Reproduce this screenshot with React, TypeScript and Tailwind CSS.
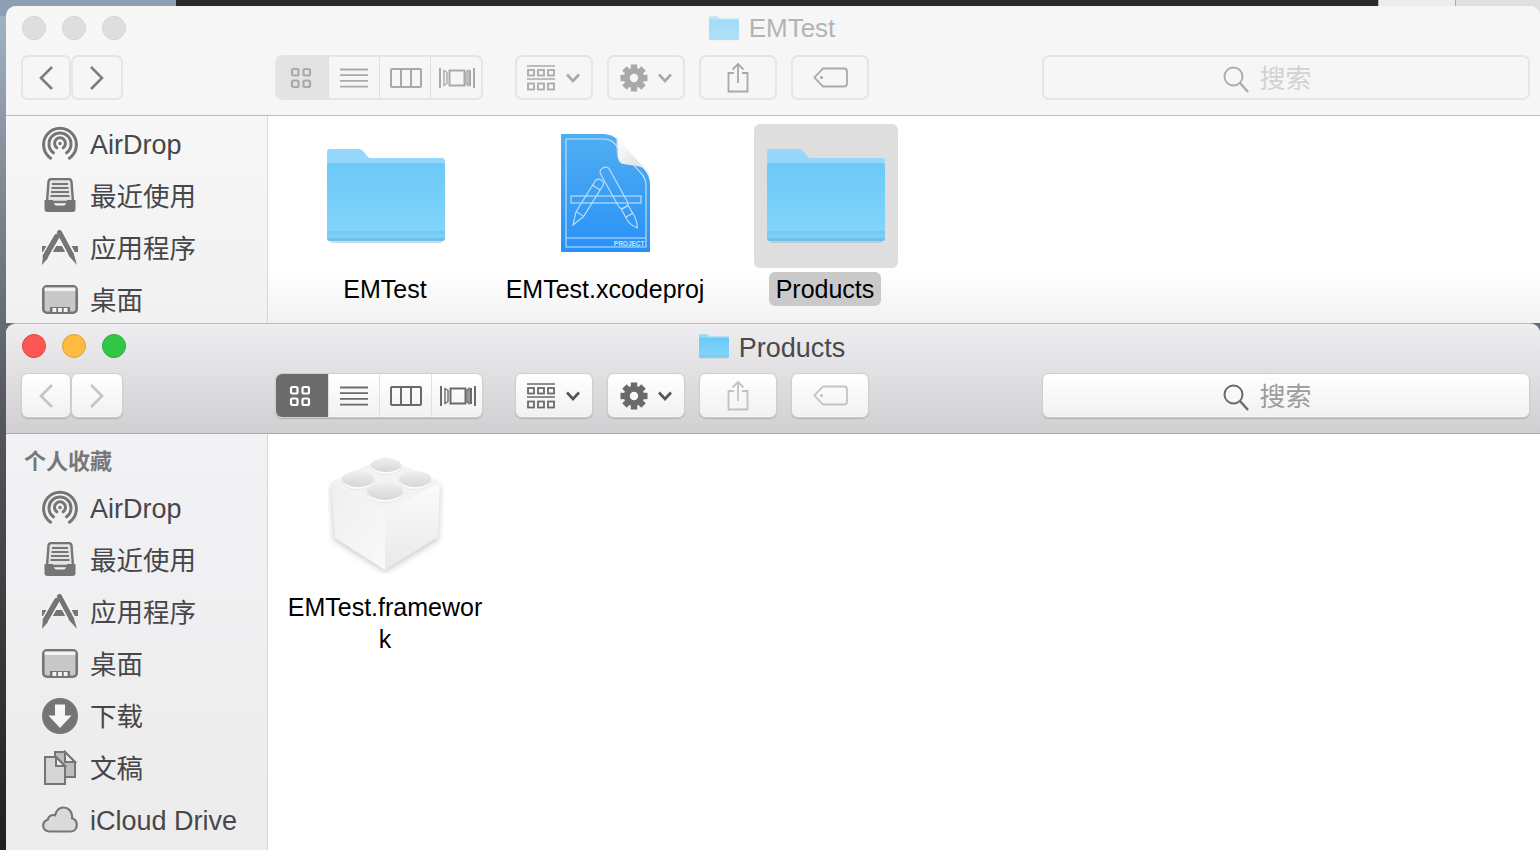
import React from 'react';

const font = "font-['Liberation_Sans','Noto_Sans_CJK_SC',sans-serif]";

const Chevron = ({ dir, className }: { dir: 'left' | 'right' | 'down'; className?: string }) => {
  if (dir === 'down')
    return (
      <svg width="16" height="10" viewBox="0 0 16 10" className={className}>
        <path d="M2 1.5 8 8l6-6.5" fill="none" stroke="currentColor" strokeWidth="2.6" />
      </svg>
    );
  return (
    <svg width="16" height="26" viewBox="0 0 16 26" className={className}>
      <path d={dir === 'left' ? 'M14 2 3 13l11 11' : 'M2 2l11 11L2 24'} fill="none" stroke="currentColor" strokeWidth="2.6" />
    </svg>
  );
};

const IconGrid = () => (
  <svg width="22" height="22" viewBox="0 0 22 22" fill="none" stroke="currentColor" strokeWidth="2.2">
    <rect x="2" y="2" width="6.5" height="6.5" rx="1.5" />
    <rect x="13.5" y="2" width="6.5" height="6.5" rx="1.5" />
    <rect x="2" y="13.5" width="6.5" height="6.5" rx="1.5" />
    <rect x="13.5" y="13.5" width="6.5" height="6.5" rx="1.5" />
  </svg>
);

const IconList = () => (
  <svg width="28" height="20" viewBox="0 0 28 20" fill="none" stroke="currentColor" strokeWidth="1.8">
    <path d="M0 1.5h28M0 7.2h28M0 12.9h28M0 18.6h28" />
  </svg>
);

const IconColumns = () => (
  <svg width="32" height="20" viewBox="0 0 32 20" fill="none" stroke="currentColor" strokeWidth="2">
    <rect x="1" y="1" width="30" height="18" rx="1" />
    <path d="M11 1v18M21 1v18" />
  </svg>
);

const IconCover = () => (
  <svg width="36" height="20" viewBox="0 0 36 20" fill="none" stroke="currentColor" strokeWidth="2">
    <rect x="10.5" y="2.5" width="15" height="15" />
    <path d="M1 0v20M31 2v16M35 0v20" />
    <path d="M5 2.5v15l3-2v-11zM29 2.5v15l-2-2v-11z" strokeWidth="1.4" />
  </svg>
);

const IconGroup = () => (
  <svg width="28" height="26" viewBox="0 0 28 26" fill="none" stroke="currentColor">
    <path d="M0 1h28M0 14h28" strokeWidth="1.6" />
    <g strokeWidth="1.8">
      <rect x="1" y="5" width="6" height="5.5" />
      <rect x="11" y="5" width="6" height="5.5" />
      <rect x="21" y="5" width="6" height="5.5" />
      <rect x="1" y="18.5" width="6" height="6" />
      <rect x="11" y="18.5" width="6" height="6" />
      <rect x="21" y="18.5" width="6" height="6" />
    </g>
  </svg>
);

const IconGear = () => (
  <svg width="28" height="28" viewBox="0 0 28 28" fill="none">
    <circle cx="14" cy="14" r="7.2" stroke="currentColor" strokeWidth="6" />
    {[0, 45, 90, 135, 180, 225, 270, 315].map((a) => (
      <rect key={a} x="10.8" y="0.5" width="6.4" height="6" fill="currentColor" transform={`rotate(${a} 14 14)`} />
    ))}
  </svg>
);

const IconShare = () => (
  <svg width="22" height="31" viewBox="0 0 22 31" fill="none" stroke="currentColor" strokeWidth="1.8">
    <path d="M7 11H1.5v18.5h19V11H15" />
    <path d="M11 21V2M5.5 7.5 11 2l5.5 5.5" />
  </svg>
);

const IconTag = () => (
  <svg width="35" height="21" viewBox="0 0 35 21" fill="none" stroke="currentColor" strokeWidth="1.8">
    <path d="M10 1.5h21a3 3 0 0 1 3 3v12a3 3 0 0 1-3 3H10L1.5 10.5z" />
    <circle cx="8.5" cy="10.5" r="1.6" fill="currentColor" stroke="none" />
  </svg>
);

const IconSearch = () => (
  <svg width="26" height="27" viewBox="0 0 26 27" fill="none" stroke="currentColor" strokeWidth="2">
    <circle cx="10.5" cy="10.5" r="9" />
    <path d="M17 17l8 9" strokeWidth="2.4" />
  </svg>
);

const AirDropIcon = () => (
  <svg width="36" height="36" viewBox="0 0 36 36" fill="none" stroke="#757575" strokeWidth="3" strokeLinecap="round">
    <path d="M8.6 32.2a16.4 16.4 0 1 1 18.8 0" />
    <path d="M11.4 26.8a11 11 0 1 1 13.2 0" />
    <path d="M14.8 21.8a5.5 5.5 0 1 1 6.4 0" />
    <circle cx="18" cy="17.5" r="1" strokeWidth="1.6" />
  </svg>
);

const RecentsIcon = () => (
  <svg width="36" height="36" viewBox="0 0 36 36">
    <path d="M5 24 6.5 3.5Q6.8 1 9.5 1h17q2.7 0 3 2.5L31 24z" fill="#e4e4e4" stroke="#757575" strokeWidth="2.4" />
    <path d="M10 6h16M9.5 10h17M9 14h18M8.5 18h19" stroke="#757575" strokeWidth="2" />
    <path d="M2.5 22H11q1 5.5 3.5 5.500h7q2.5 0 3.500-5.500h8.500v9q0 3-3 3H5.500q-3 0-3-3z" fill="#757575" />
  </svg>
);

const AppsIcon = () => (
  <svg width="36" height="36" viewBox="0 0 36 36" fill="none">
    <path d="M0 16h36v6H0z" fill="#757575" />
    <path d="M14.7 6.7 3 27M17.5 2 29 24" stroke="#f6f6f6" strokeWidth="8.5" />
    <path d="M14.7 6.7 3.5 26" stroke="#757575" strokeWidth="5.5" strokeLinecap="round" />
    <path d="M17.5 2.5 29 24" stroke="#757575" strokeWidth="5" strokeLinecap="round" />
    <path d="M1 25 6 28 0 35z" fill="#757575" />
    <path d="M26.5 25.5 31.5 23 35 35z" fill="#757575" />
  </svg>
);

const DesktopIcon = () => (
  <svg width="36" height="36" viewBox="0 0 36 36">
    <rect x="1.3" y="4.3" width="33.4" height="26.4" rx="3.5" fill="#c8c8c8" stroke="#757575" strokeWidth="2.6" />
    <rect x="2.6" y="5.6" width="30.8" height="3.4" fill="#f2f2f2" />
    <rect x="8" y="25" width="20" height="5" fill="#757575" />
    <path d="M10.5 26h3.8v4h-3.8zM16.1 26h3.8v4h-3.8zM21.7 26h3.8v4h-3.8z" fill="#f4f4f4" />
  </svg>
);

const DownloadIcon = () => (
  <svg width="36" height="36" viewBox="0 0 36 36">
    <circle cx="18" cy="18" r="18" fill="#757575" />
    <path d="M13 6.5h10v11h6.5L18 30 6.5 17.5H13z" fill="#f6f6f6" />
  </svg>
);

const DocsIcon = () => (
  <svg width="36" height="36" viewBox="0 0 36 36" stroke="#757575" strokeWidth="2">
    <path d="M13 2h10l10 10v15H13z" fill="#bcbcbc" />
    <path d="M23 2v10h10z" fill="#ececec" />
    <path d="M3 7h11l9 9v18H3z" fill="#d6d6d6" />
    <path d="M14 7v9h9z" fill="#ececec" />
  </svg>
);

const CloudIcon = () => (
  <svg width="36" height="36" viewBox="0 0 36 36" fill="#dadada" stroke="#757575" strokeWidth="2.2">
    <path d="M7.5 29.5C3.6 29.5 1.2 26.8 1.2 23.6c0-2.9 2-5.2 4.5-5.9C6.5 14.7 8.9 13 11.5 13c.6 0 1 0 1.5.2C14.2 8.5 17.5 5.500 21.5 5.500c4.800 0 8.500 3.800 8.700 8.800 0 .7 0 1.400-.1 2 3.400 1 4.700 3.800 4.700 6.600 0 3.500-2.400 6.600-6.400 6.600z" />
  </svg>
);

const FolderArt = ({ width, height, dim }: { width: number; height: number; dim?: boolean }) => (
  <svg width={width} height={height} viewBox="0 0 118 96" className={dim ? 'opacity-60' : ''}>
    <defs>
      <linearGradient id="folderFront" x1="0" y1="0" x2="0" y2="1">
        <stop offset="0" stopColor="#6bc9f8" />
        <stop offset="1" stopColor="#84d5fb" />
      </linearGradient>
    </defs>
    <path d="M3 0h29q3 0 5 3l3 4q1 2 4 2h71q3 0 3 3v20H0V3q0-3 3-3z" fill="#95d8fc" />
    <path d="M0 17q0-3 3-3h112q3 0 3 3v70H0z" fill="url(#folderFront)" />
    <path d="M0 82h118v3.5H0z" fill="#74c9f3" />
    <path d="M0 85.5h118V89H0z" fill="#7ccff7" />
    <path d="M0 89h118q0 3-3 3.2H3Q0 92 0 89z" fill="#6cc0ea" />
    <path d="M3 92.5h112l-1 1.5H4z" fill="#9ab8c8" opacity=".5" />
  </svg>
);

const ProjectArt = () => (
  <svg width="92" height="120" viewBox="0 0 92 120" className="mb-[6px]">
    <defs>
      <linearGradient id="proj" x1="0" y1="0" x2="0" y2="1">
        <stop offset="0" stopColor="#50aef2" />
        <stop offset="1" stopColor="#2a90f5" />
      </linearGradient>
      <linearGradient id="curl" x1="0" y1="0" x2="1" y2="1">
        <stop offset="0" stopColor="#ffffff" />
        <stop offset="1" stopColor="#cfd6dc" />
      </linearGradient>
    </defs>
    <path d="M1 1h42q9 0 15 6l26 29q6 7 6 16v67H1z" fill="url(#proj)" />
    <g fill="none" stroke="#c2e3fb" strokeWidth="1.1">
      <path d="M6 114V6h37q7 0 11 4l26 29q6 6 6 13v62z" />
      <path d="M6 105h80" />
      <rect x="11" y="63" width="70" height="7" />
      <g transform="translate(13 92) rotate(32)">
        <path d="M0 0-4.5-13V-49q0-4 4.5-4t4.5 4V-13z" />
        <path d="M-4.5-13h9M-4.5-44h9" />
      </g>
      <g transform="translate(43 35) rotate(-29)">
        <rect x="-5" y="0" width="10" height="45" rx="4" />
        <rect x="-4" y="45" width="8" height="9" />
        <path d="M-4 54q-1 8 5 15 4-8 3-15" />
      </g>
    </g>
    <text x="84.5" y="112.5" textAnchor="end" fontSize="6.5" fontWeight="700" fill="#c2e3fb" fontFamily="Liberation Sans">PROJECT</text>
    <path d="M57 4q1 1 2 3l27 30q3 3 4 8-4-11-13-12l-14-2q-4-1-5-6z" fill="url(#curl)" />
    <path d="M57 3q-1 20 2 24 1 3 5 3l21 3" fill="none" stroke="#dfe7ed" strokeWidth="0.6" />
  </svg>
);

const FrameworkArt = () => (
  <svg width="116" height="120" viewBox="0 0 116 120">
    <defs>
      <linearGradient id="left" x1="0" y1="0" x2="1" y2="1">
        <stop offset="0" stopColor="#efefef" />
        <stop offset="1" stopColor="#f9f9f9" />
      </linearGradient>
      <linearGradient id="right" x1="0" y1="0" x2="0" y2="1">
        <stop offset="0" stopColor="#fbfbfb" />
        <stop offset="1" stopColor="#e9e9e9" />
      </linearGradient>
      <linearGradient id="stud" x1="0" y1="0" x2="0" y2="1">
        <stop offset="0" stopColor="#f0f0f0" />
        <stop offset="1" stopColor="#d6d6d6" />
      </linearGradient>
      <filter id="soft" x="-20%" y="-20%" width="140%" height="140%">
        <feGaussianBlur stdDeviation="3" />
      </filter>
    </defs>
    <path d="M3 30 56 62 112 30 110 86 57 118 6 86z" fill="#b8b8b8" opacity=".75" filter="url(#soft)" />
    <path d="M3 28 57 58v58L7 84z" fill="url(#left)" />
    <path d="M112 28 57 58v58l53-33z" fill="url(#right)" />
    <path d="M57 3 112 28 57 58 3 28z" fill="#f3f3f3" />
    {[
      [58, 11, 15, 7],
      [30, 25, 16, 8],
      [87, 25, 16, 8],
      [57, 37, 18, 9],
    ].map(([cx, cy, rx, ry]) => (
      <g key={`${cx}-${cy}`}>
        <ellipse cx={cx} cy={cy + 2.5} rx={rx} ry={ry} fill="#fbfbfb" stroke="#dedede" strokeWidth="0.7" />
        <ellipse cx={cx} cy={cy} rx={rx} ry={ry} fill="url(#stud)" />
      </g>
    ))}
  </svg>
);

const Button = ({ active, width, children }: { active: boolean; width: string; children: React.ReactNode }) => (
  <div
    className={`${width} flex h-[45px] items-center justify-center rounded-[7px] ${
      active
        ? 'border border-[#cfcfcf] bg-linear-to-b from-white to-[#f1f1f1] shadow-[0_1px_1px_rgba(0,0,0,0.18)]'
        : 'border-2 border-[#e5e5e5]'
    }`}
  >
    {children}
  </div>
);

const rows = [
  { label: 'AirDrop', icon: <AirDropIcon />, size: 'pt-[2px] text-[27px]' },
  { label: '最近使用', icon: <RecentsIcon />, size: 'pt-1 text-[26.5px]' },
  { label: '应用程序', icon: <AppsIcon />, size: 'pt-1 text-[26.5px]' },
  { label: '桌面', icon: <DesktopIcon />, size: 'pt-1 text-[26.5px]' },
  { label: '下载', icon: <DownloadIcon />, size: 'pt-1 text-[26.5px]' },
  { label: '文稿', icon: <DocsIcon />, size: 'pt-1 text-[26.5px]' },
  { label: 'iCloud Drive', icon: <CloudIcon />, size: 'pt-[2px] text-[27px]' },
];

const Sidebar = ({ active, count }: { active: boolean; count: number }) => (
  <div
    className={`flex w-[262px] shrink-0 flex-col border-r border-[#d8d8d8] pl-9 ${
      active ? 'bg-linear-to-b from-[#f2f1f4] to-[#ececec] pt-3' : 'bg-linear-to-b from-[#f7f7f7] to-[#f1f1f1] pt-[2px]'
    }`}
  >
    {active && <div className="-ml-[18px] mb-1 h-8 text-[22px] leading-8 font-bold text-[#77777a]">个人收藏</div>}
    {rows.slice(0, count).map((r) => (
      <div key={r.label} className="flex h-[52px] shrink-0 items-center gap-3">
        {r.icon}
        <span className={`${r.size} text-[#47474a]`}>{r.label}</span>
      </div>
    ))}
  </div>
);

const FileItem = ({ label, selected, children }: { label: string; selected?: boolean; children: React.ReactNode }) => (
  <div className="relative flex w-[220px] flex-col items-center">
    <div className={`flex h-36 w-36 shrink-0 items-center justify-center rounded-[6px] ${selected ? 'bg-[#dedede]' : ''}`}>{children}</div>
    <div className={`mt-1 mr-[2px] max-w-[218px] rounded-[6px] px-[7px] py-px text-center text-[25px] leading-8 break-all text-black ${selected ? 'bg-[#cacaca]' : ''}`}>
      {label}
    </div>
  </div>
);

const Window = ({
  active,
  title,
  className,
  children,
}: {
  active: boolean;
  title: string;
  className: string;
  children: React.ReactNode;
}) => {
  const iconOn = active ? 'text-[#6a6a6a]' : 'text-[#a9a9a9]';
  const iconOff = active ? 'text-[#c2c2c2]' : 'text-[#a9a9a9]';
  return (
    <div className={`absolute left-[6px] flex w-[1534px] flex-col overflow-hidden rounded-t-[10px] bg-white ${className}`}>
      <div className={`flex h-[110px] shrink-0 flex-col border-b ${active ? 'border-[#a9a9a9] bg-linear-to-b from-[#eeedef] to-[#d1cfd1]' : 'border-[#bdbdbd] bg-[#f6f6f6]'}`}>
        <div className="relative mb-[5px] flex h-11 shrink-0 items-center gap-4 pl-4">
          <div className={`h-6 w-6 rounded-full border ${active ? 'border-[#e0443e] bg-[#fc5753]' : 'border-[#d4d4d4] bg-[#dedede]'}`} />
          <div className={`h-6 w-6 rounded-full border ${active ? 'border-[#dea034] bg-[#fdbc40]' : 'border-[#d4d4d4] bg-[#dedede]'}`} />
          <div className={`h-6 w-6 rounded-full border ${active ? 'border-[#27aa35] bg-[#33c748]' : 'border-[#d4d4d4] bg-[#dedede]'}`} />
          <div className="absolute inset-0 flex items-center justify-center gap-[10px] pr-[2px]">
            <FolderArt width={30} height={25} dim={!active} />
            <span className={active ? 'pt-[5px] text-[27px] text-[#4a4a4c]' : 'pt-px text-[26px] text-[#b3b3b3]'}>{title}</span>
          </div>
        </div>
        <div className="flex items-center pr-[10px] pl-[15px]">
          <div className="flex">
            <Button active={active} width="w-[50px]"><Chevron dir="left" className={active ? 'text-[#c4c4c4]' : 'text-[#7d7d7d]'} /></Button>
            <Button active={active} width="w-[52px]"><Chevron dir="right" className={active ? 'text-[#c4c4c4]' : 'text-[#7d7d7d]'} /></Button>
          </div>
          <div className={`ml-[152px] flex h-[45px] w-[208px] overflow-hidden rounded-[7px] ${active ? 'border border-[#cfcfcf] bg-linear-to-b from-white to-[#f1f1f1] shadow-[0_1px_1px_rgba(0,0,0,0.18)]' : 'border-2 border-[#e5e5e5]'} ${iconOn}`}>
            <div className={`flex w-[52px] items-center justify-center pr-1 ${active ? 'bg-[#6c6c6c] text-white' : 'bg-[#e3e3e3]'}`}><IconGrid /></div>
            <div className="flex w-[52px] items-center justify-center border-l border-[#e0e0e0]"><IconList /></div>
            <div className="flex w-[52px] items-center justify-center border-l border-[#e0e0e0] pl-[2px]"><IconColumns /></div>
            <div className="flex w-[52px] items-center justify-center border-l border-[#e0e0e0] pl-[2px]"><IconCover /></div>
          </div>
          <div className={`ml-8 flex gap-[14px] ${iconOn}`}>
            <Button active={active} width="w-[78px] gap-[10px]">
              <IconGroup />
              <Chevron dir="down" className={active ? 'text-[#555]' : ''} />
            </Button>
            <Button active={active} width="w-[78px] gap-[9px]">
              <IconGear />
              <Chevron dir="down" className={active ? 'text-[#555]' : ''} />
            </Button>
            <Button active={active} width="w-[78px]"><span className={iconOff}><IconShare /></span></Button>
            <Button active={active} width="w-[78px]"><span className={iconOff}><IconTag /></span></Button>
          </div>
          <div className="ml-auto w-[488px]">
            <Button active={active} width="w-full gap-[10px] pr-[37px]">
              <span className={`pt-[3px] ${active ? 'text-[#6a6a6a]' : 'text-[#adadad]'}`}><IconSearch /></span>
              <span className={`pt-[3px] text-[26px] ${active ? 'text-[#9c9c9c]' : 'text-[#d2d2d2]'}`}>搜索</span>
            </Button>
          </div>
        </div>
      </div>
      {children}
    </div>
  );
};

export default function App() {
  return (
    <div className={`relative h-[850px] w-[1540px] overflow-hidden bg-linear-to-b from-[#a5b6c4] via-[#5a5e64] via-45% to-[#20201c] ${font}`}>
      <div className="flex h-4">
        <div className="w-[176px] bg-[#8ba0b2]" />
        <div className="flex-1 bg-[#2a2a2a]" />
        <div className="w-[77px] border-l border-[#bdbdbd] bg-[#ececec]" />
        <div className="w-[85px] border-l border-[#a9a9a9] bg-[#dfdfdf]" />
      </div>

      <Window active={false} title="EMTest" className="top-[6px] h-[317px]">
        <div className="flex min-h-0 flex-1">
          <Sidebar active={false} count={4} />
          <div className="relative flex flex-1 pt-2 pl-2">
            <div className="pointer-events-none absolute inset-x-0 bottom-0 h-[56px] bg-linear-to-b from-transparent to-[#f2f2f2]" />
            <FileItem label="EMTest"><div className="mt-[2px]"><FolderArt width={118} height={96} /></div></FileItem>
            <FileItem label="EMTest.xcodeproj"><ProjectArt /></FileItem>
            <FileItem label="Products" selected><div className="mt-[2px]"><FolderArt width={118} height={96} /></div></FileItem>
          </div>
        </div>
      </Window>

      <Window active title="Products" className="top-[323px] h-[527px] border-t border-[#bcbcbc]">
        <div className="flex min-h-0 flex-1">
          <Sidebar active count={7} />
          <div className="flex flex-1 pt-2 pl-2">
            <FileItem label="EMTest.framework"><FrameworkArt /></FileItem>
          </div>
        </div>
      </Window>
    </div>
  );
}
